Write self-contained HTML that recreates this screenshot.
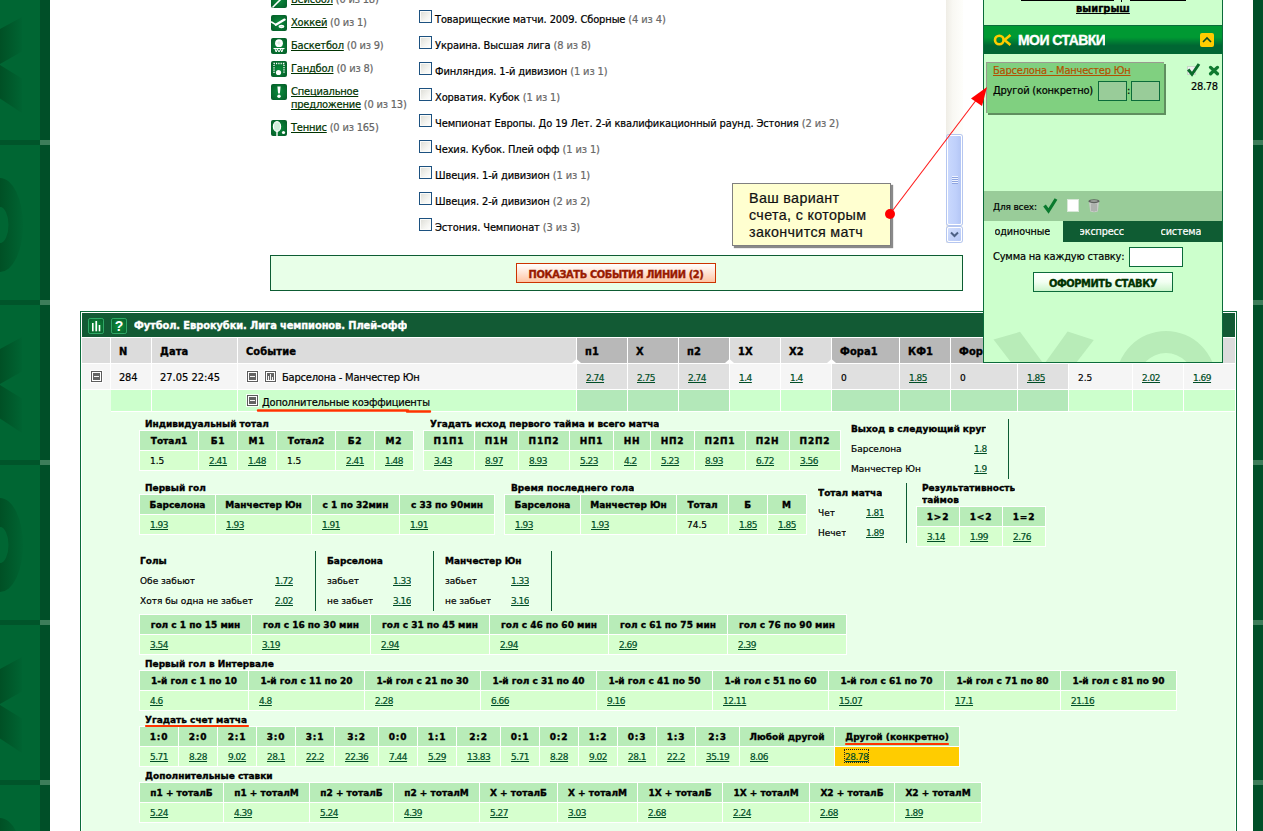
<!DOCTYPE html><html lang="ru"><head><meta charset="utf-8"><title>Линия</title><style>
html,body{margin:0;padding:0;}
body{width:1263px;height:831px;overflow:hidden;background:#fff;position:relative;font-family:"DejaVu Sans Condensed","Liberation Sans",sans-serif;font-size:11px;letter-spacing:-0.2px;color:#000;-webkit-text-stroke:0.2px;}
div,span,a{box-sizing:border-box;text-decoration-skip-ink:none;}
.ab{position:absolute;}
.c{position:absolute;white-space:nowrap;overflow:hidden;}
a.g{color:#005028;text-decoration:underline;}
.s10{font-family:"DejaVu Sans","Liberation Sans",sans-serif;font-size:9px;letter-spacing:0;}
.b{font-weight:bold;-webkit-text-stroke:0.35px;}
.od{color:#004d26;text-decoration:underline;letter-spacing:-0.5px;}
.hd{background:#b8ecb8;font-weight:bold;-webkit-text-stroke:0.35px;}
.dt{background:#d6ffce;}
.sp a{color:#003300;text-decoration:underline;}
.sp span{color:#666;}
.cb{position:absolute;width:13px;height:13px;border:1px solid #1c5180;background:linear-gradient(135deg,#dcdcd5 0%,#f4f4f0 60%,#fff 100%);box-shadow:inset 0 0 0 1px #fbfbf8;}
.li{position:absolute;left:435px;white-space:nowrap;line-height:13px;letter-spacing:-0.12px;}
.li span{color:#686868;}
.vl{position:absolute;width:1px;background:#0d5c33;}
.mi{position:absolute;width:11px;height:11px;border:1px solid #5c5c5c;background:#fff;box-shadow:0 0 0 1px rgba(255,255,255,.8);}
.mi i{position:absolute;left:1px;top:1px;width:7px;height:7px;background:#636363;}
.mi b{position:absolute;left:2px;top:4px;width:5px;height:1px;background:#f4f4f4;}
</style></head><body>
<div class="ab" style="left:0;top:0;width:40px;height:831px;background:#006633"></div>
<div class="ab" style="left:40px;top:0;width:10px;height:831px;background:#004f28"></div>
<div class="ab" style="left:1253px;top:0;width:10px;height:831px;background:#004f28"></div>
<svg class="ab" style="left:0;top:0" width="50" height="831" viewBox="0 0 50 831"><defs><linearGradient id="lg" x1="0" x2="1" y1="0" y2="0"><stop offset="0" stop-color="#005025"/><stop offset="0.55" stop-color="#005b2c"/><stop offset="1" stop-color="#006432"/></linearGradient></defs><polygon points="0,29 22,17 22,51.5 0,64" fill="url(#lg)"/><polygon points="0,65 22,78.5 22,113 0,98.5" fill="url(#lg)"/><path fill-rule="evenodd" fill="url(#lg)" d="M0,178 A23,47 0 0 1 0,272 Z M0,207 A8.5,18 0 0 1 0,243 Z"/><polygon points="0,349 22,337 22,371.5 0,384" fill="url(#lg)"/><polygon points="0,385 22,398.5 22,433 0,418.5" fill="url(#lg)"/><path fill-rule="evenodd" fill="url(#lg)" d="M0,498 A23,47 0 0 1 0,592 Z M0,527 A8.5,18 0 0 1 0,563 Z"/><polygon points="0,669 22,657 22,691.5 0,704" fill="url(#lg)"/><polygon points="0,705 22,718.5 22,753 0,738.5" fill="url(#lg)"/><path fill-rule="evenodd" fill="url(#lg)" d="M0,818 A23,47 0 0 1 0,912 Z M0,847 A8.5,18 0 0 1 0,883 Z"/><rect x="0" y="140" width="40" height="5" fill="#00552a"/><rect x="40" y="140" width="10" height="5" fill="#3d7d5a"/><rect x="0" y="300" width="40" height="5" fill="#00552a"/><rect x="40" y="300" width="10" height="5" fill="#3d7d5a"/><rect x="0" y="460" width="40" height="5" fill="#00552a"/><rect x="40" y="460" width="10" height="5" fill="#3d7d5a"/><rect x="0" y="620" width="40" height="5" fill="#00552a"/><rect x="40" y="620" width="10" height="5" fill="#3d7d5a"/><rect x="0" y="780" width="40" height="5" fill="#00552a"/><rect x="40" y="780" width="10" height="5" fill="#3d7d5a"/></svg>
<div class="ab" style="left:1253px;top:140px;width:10px;height:5px;background:#3d7d5a"></div>
<div class="ab" style="left:1253px;top:300px;width:10px;height:5px;background:#3d7d5a"></div>
<div class="ab" style="left:1253px;top:460px;width:10px;height:5px;background:#3d7d5a"></div>
<div class="ab" style="left:1253px;top:620px;width:10px;height:5px;background:#3d7d5a"></div>
<div class="ab" style="left:1253px;top:780px;width:10px;height:5px;background:#3d7d5a"></div>
<div class="ab" style="left:271px;top:-8px;width:16px;height:16px"><svg width="16" height="16" viewBox="0 0 16 16" style="display:block"><defs><radialGradient id="rgbase" cx="50%" cy="50%" r="70%"><stop offset="0" stop-color="#0a8c3c"/><stop offset="1" stop-color="#045a27"/></radialGradient></defs><rect x="0" y="0" width="16" height="16" rx="2" fill="url(#rgbase)"/><path d="M2,15 L12,5" stroke="#fff" stroke-width="1.6" stroke-linecap="round"/></svg></div>
<div class="ab sp" style="left:291px;top:-7px;line-height:13px;white-space:nowrap"><a>Бейсбол</a> <span>(0 из 18)</span></div>
<div class="ab" style="left:271px;top:15px;width:16px;height:16px"><svg width="16" height="16" viewBox="0 0 16 16" style="display:block"><defs><radialGradient id="rghock" cx="50%" cy="50%" r="70%"><stop offset="0" stop-color="#0a8c3c"/><stop offset="1" stop-color="#045a27"/></radialGradient></defs><rect x="0" y="0" width="16" height="16" rx="2" fill="url(#rghock)"/><path d="M0.5,7 L4.8,9.7" stroke="#fff" stroke-width="1.5" fill="none" stroke-linecap="round"/><path d="M4.8,9.7 L13.6,4.6" stroke="#fff" stroke-width="2.3" fill="none" stroke-linecap="round"/><ellipse cx="10.5" cy="11.5" rx="2.9" ry="1.7" fill="#fff"/><path d="M9.3,11.6 h2.4" stroke="#8fd0a5" stroke-width="0.6"/></svg></div>
<div class="ab sp" style="left:291px;top:16px;line-height:13px;white-space:nowrap"><a>Хоккей</a> <span>(0 из 1)</span></div>
<div class="ab" style="left:271px;top:38px;width:16px;height:16px"><svg width="16" height="16" viewBox="0 0 16 16" style="display:block"><defs><radialGradient id="rgbask" cx="50%" cy="50%" r="70%"><stop offset="0" stop-color="#0a8c3c"/><stop offset="1" stop-color="#045a27"/></radialGradient></defs><rect x="0" y="0" width="16" height="16" rx="2" fill="url(#rgbask)"/><circle cx="8" cy="5.2" r="3.9" fill="#fff"/><path d="M5.5,5 h4 M8,3 v4" stroke="#bfe6cc" stroke-width="0.7"/><path d="M2.5,10.5 h11 M4,11 l1.2,3 l1.2,-3 l1.6,3 l1.6,-3 l1.2,3 l1.2,-3" stroke="#fff" stroke-width="1" fill="none"/></svg></div>
<div class="ab sp" style="left:291px;top:39px;line-height:13px;white-space:nowrap"><a>Баскетбол</a> <span>(0 из 9)</span></div>
<div class="ab" style="left:271px;top:61px;width:16px;height:16px"><svg width="16" height="16" viewBox="0 0 16 16" style="display:block"><defs><radialGradient id="rghand" cx="50%" cy="50%" r="70%"><stop offset="0" stop-color="#0a8c3c"/><stop offset="1" stop-color="#045a27"/></radialGradient></defs><rect x="0" y="0" width="16" height="16" rx="2" fill="url(#rghand)"/><path d="M3,12 V2.5 H13 V12" stroke="#fff" stroke-width="1.3" fill="none" stroke-dasharray="1.2 1.1"/><circle cx="7.5" cy="11.5" r="2.6" fill="#fff"/></svg></div>
<div class="ab sp" style="left:291px;top:62px;line-height:13px;white-space:nowrap"><a>Гандбол</a> <span>(0 из 8)</span></div>
<div class="ab" style="left:271px;top:84px;width:16px;height:16px"><svg width="16" height="16" viewBox="0 0 16 16" style="display:block"><defs><radialGradient id="rgspec" cx="50%" cy="50%" r="70%"><stop offset="0" stop-color="#0a8c3c"/><stop offset="1" stop-color="#045a27"/></radialGradient></defs><rect x="0" y="0" width="16" height="16" rx="2" fill="url(#rgspec)"/><path d="M6.4,2.5 h3.2 l-0.7,7 h-1.8 z" fill="#fff"/><circle cx="8" cy="12.3" r="1.7" fill="#fff"/></svg></div>
<div class="ab sp" style="left:291px;top:85px;line-height:13px;white-space:nowrap"><a>Специальное</a><br><a>предложение</a> <span>(0 из 13)</span></div>
<div class="ab" style="left:271px;top:120px;width:16px;height:16px"><svg width="16" height="16" viewBox="0 0 16 16" style="display:block"><defs><radialGradient id="rgtenn" cx="50%" cy="50%" r="70%"><stop offset="0" stop-color="#0a8c3c"/><stop offset="1" stop-color="#045a27"/></radialGradient></defs><rect x="0" y="0" width="16" height="16" rx="2" fill="url(#rgtenn)"/><ellipse cx="6" cy="6.5" rx="3.6" ry="4.8" fill="#cfeeda" stroke="#fff" stroke-width="1.2"/><path d="M6,11 v5" stroke="#fff" stroke-width="1.4"/><circle cx="12.5" cy="12.5" r="1.6" fill="#fff"/></svg></div>
<div class="ab sp" style="left:291px;top:121px;line-height:13px;white-space:nowrap"><a>Теннис</a> <span>(0 из 165)</span></div>
<div class="cb" style="left:419px;top:10px"></div>
<div class="li" style="top:13px">Товарищеские матчи. 2009. Сборные <span>(4 из 4)</span></div>
<div class="cb" style="left:419px;top:36px"></div>
<div class="li" style="top:39px">Украина. Высшая лига <span>(8 из 8)</span></div>
<div class="cb" style="left:419px;top:62px"></div>
<div class="li" style="top:65px">Финляндия. 1-й дивизион <span>(1 из 1)</span></div>
<div class="cb" style="left:419px;top:88px"></div>
<div class="li" style="top:91px">Хорватия. Кубок <span>(1 из 1)</span></div>
<div class="cb" style="left:419px;top:114px"></div>
<div class="li" style="top:117px">Чемпионат Европы. До 19 Лет. 2-й квалификационный раунд. Эстония <span>(2 из 2)</span></div>
<div class="cb" style="left:419px;top:140px"></div>
<div class="li" style="top:143px">Чехия. Кубок. Плей офф <span>(1 из 1)</span></div>
<div class="cb" style="left:419px;top:166px"></div>
<div class="li" style="top:169px">Швеция. 1-й дивизион <span>(1 из 1)</span></div>
<div class="cb" style="left:419px;top:192px"></div>
<div class="li" style="top:195px">Швеция. 2-й дивизион <span>(2 из 2)</span></div>
<div class="cb" style="left:419px;top:218px"></div>
<div class="li" style="top:221px">Эстония. Чемпионат <span>(3 из 3)</span></div>
<div class="ab" style="left:946px;top:0;width:17px;height:243px;background:linear-gradient(90deg,#efede6 0%,#f9f8f3 40%,#fefefb 100%)"></div>
<div class="ab" style="left:947px;top:135px;width:15px;height:90px;background:linear-gradient(90deg,#c9d8fd 0%,#bfd0fb 60%,#b4c6f5 100%);border:1px solid #fff;border-radius:2px;box-shadow:0 0 0 1px #b5c6f0"></div>
<div class="ab" style="left:952px;top:176px;width:6px;height:1px;background:#eef3ff;box-shadow:0 1px 0 #8ea5e0"></div>
<div class="ab" style="left:952px;top:178px;width:6px;height:1px;background:#eef3ff;box-shadow:0 1px 0 #8ea5e0"></div>
<div class="ab" style="left:952px;top:180px;width:6px;height:1px;background:#eef3ff;box-shadow:0 1px 0 #8ea5e0"></div>
<div class="ab" style="left:952px;top:182px;width:6px;height:1px;background:#eef3ff;box-shadow:0 1px 0 #8ea5e0"></div>
<div class="ab" style="left:947px;top:227px;width:15px;height:15px;background:linear-gradient(135deg,#d2defd,#b6c8f6);border:1px solid #fff;border-radius:2px;box-shadow:0 0 0 1px #b5c6f0"></div>
<svg class="ab" style="left:947px;top:227px" width="15" height="15" viewBox="0 0 15 15"><path d="M4,5.5 L7.5,9 L11,5.5" stroke="#4d6185" stroke-width="2" fill="none"/></svg>
<div class="ab" style="left:270px;top:255px;width:693px;height:36px;border:1px solid #0d5c33;background:#e8ffe8"></div>
<div class="ab b" style="left:516px;top:263px;width:200px;height:20px;border:1px solid #cc3300;background:linear-gradient(180deg,#fff 0%,#ffe3d3 50%,#ffc4a3 100%);color:#991a00;text-align:center;line-height:22px;letter-spacing:-0.4px;overflow:hidden">ПОКАЗАТЬ СОБЫТИЯ ЛИНИИ (2)</div>
<div class="ab" style="left:80px;top:311px;width:1157px;height:540px;border:1px solid #0b6b3a;background:#fff"></div>
<div class="ab" style="left:82px;top:313px;width:1153px;height:540px;background:#e9ffe9"></div>
<div class="ab" style="left:82px;top:313px;width:1153px;height:24px;background:#125a34"></div>
<div class="ab" style="left:82px;top:337px;width:1153px;height:53px;background:#fff"></div>
<div class="ab" style="left:111px;top:390px;width:1124px;height:22px;background:#fff"></div>
<svg class="ab" style="left:88px;top:318px" width="16" height="16" viewBox="0 0 16 16"><defs><radialGradient id="tg88" cx="50%" cy="50%" r="65%"><stop offset="0" stop-color="#0a9238"/><stop offset="1" stop-color="#0a5c2e"/></radialGradient></defs><rect x="0.5" y="0.5" width="15" height="15" rx="1.6" fill="url(#tg88)" stroke="#2fa866"/><rect x="4" y="5" width="1.6" height="8.3" fill="#fff"/><rect x="7.4" y="3" width="1.7" height="10.3" fill="#fff"/><rect x="10.7" y="7" width="1.6" height="6.3" fill="#fff"/></svg>
<svg class="ab" style="left:111px;top:318px" width="16" height="16" viewBox="0 0 16 16"><defs><radialGradient id="tg111" cx="50%" cy="50%" r="65%"><stop offset="0" stop-color="#0a9238"/><stop offset="1" stop-color="#0a5c2e"/></radialGradient></defs><rect x="0.5" y="0.5" width="15" height="15" rx="1.6" fill="url(#tg111)" stroke="#2fa866"/><text x="8" y="13" text-anchor="middle" font-family="Liberation Sans,sans-serif" font-weight="bold" font-size="14" fill="#fff">?</text></svg>
<div class="c b" style="left:134px;top:313px;height:24px;line-height:26px;color:#fff;letter-spacing:-0.1px">Футбол. Еврокубки. Лига чемпионов. Плей-офф</div>
<div class="c b" style="left:82px;top:338px;width:28px;height:25px;line-height:27px;padding-left:8px;background:#dcdcdc;font-size:11px;letter-spacing:0.1px"></div>
<div class="c" style="left:82px;top:364px;width:28px;height:25px;line-height:27px;padding-left:8px;background:#f5f5f5;"></div>
<div class="c b" style="left:111px;top:338px;width:40px;height:25px;line-height:27px;padding-left:8px;background:#dcdcdc;font-size:11px;letter-spacing:0.1px">N</div>
<div class="c" style="left:111px;top:364px;width:40px;height:25px;line-height:27px;padding-left:8px;background:#f5f5f5;">284</div>
<div class="ab" style="left:111px;top:390px;width:40px;height:21px;background:#ccffcc"></div>
<div class="c b" style="left:152px;top:338px;width:85px;height:25px;line-height:27px;padding-left:8px;background:#dcdcdc;font-size:11px;letter-spacing:0.1px">Дата</div>
<div class="c" style="left:152px;top:364px;width:85px;height:25px;line-height:27px;padding-left:8px;background:#f5f5f5;letter-spacing:0;">27.05 22:45</div>
<div class="ab" style="left:152px;top:390px;width:85px;height:21px;background:#ccffcc"></div>
<div class="c b" style="left:238px;top:338px;width:338px;height:25px;line-height:27px;padding-left:8px;background:#dcdcdc;font-size:11px;letter-spacing:0.1px">Событие</div>
<div class="c" style="left:238px;top:364px;width:338px;height:25px;line-height:27px;padding-left:8px;background:#f5f5f5;"></div>
<div class="ab" style="left:238px;top:390px;width:338px;height:21px;background:#ccffcc"></div>
<div class="c b" style="left:577px;top:338px;width:50px;height:25px;line-height:27px;padding-left:8px;background:#b8b8b8;font-size:11px;letter-spacing:0.1px">п1</div>
<div class="c s10" style="left:577px;top:364px;width:50px;height:25px;line-height:28px;padding-left:9px;background:#e0e0e0;"><span class="od">2.74</span></div>
<div class="ab" style="left:577px;top:390px;width:50px;height:21px;background:#b3e8b9"></div>
<div class="c b" style="left:628px;top:338px;width:50px;height:25px;line-height:27px;padding-left:8px;background:#b8b8b8;font-size:11px;letter-spacing:0.1px">X</div>
<div class="c s10" style="left:628px;top:364px;width:50px;height:25px;line-height:28px;padding-left:9px;background:#e0e0e0;"><span class="od">2.75</span></div>
<div class="ab" style="left:628px;top:390px;width:50px;height:21px;background:#b3e8b9"></div>
<div class="c b" style="left:679px;top:338px;width:50px;height:25px;line-height:27px;padding-left:8px;background:#b8b8b8;font-size:11px;letter-spacing:0.1px">п2</div>
<div class="c s10" style="left:679px;top:364px;width:50px;height:25px;line-height:28px;padding-left:9px;background:#e0e0e0;"><span class="od">2.74</span></div>
<div class="ab" style="left:679px;top:390px;width:50px;height:21px;background:#b3e8b9"></div>
<div class="c b" style="left:730px;top:338px;width:50px;height:25px;line-height:27px;padding-left:8px;background:#dcdcdc;font-size:11px;letter-spacing:0.1px">1X</div>
<div class="c s10" style="left:730px;top:364px;width:50px;height:25px;line-height:28px;padding-left:9px;background:#f5f5f5;"><span class="od">1.4</span></div>
<div class="ab" style="left:730px;top:390px;width:50px;height:21px;background:#ccffcc"></div>
<div class="c b" style="left:781px;top:338px;width:50px;height:25px;line-height:27px;padding-left:8px;background:#dcdcdc;font-size:11px;letter-spacing:0.1px">X2</div>
<div class="c s10" style="left:781px;top:364px;width:50px;height:25px;line-height:28px;padding-left:9px;background:#f5f5f5;"><span class="od">1.4</span></div>
<div class="ab" style="left:781px;top:390px;width:50px;height:21px;background:#ccffcc"></div>
<div class="c b" style="left:832px;top:338px;width:67px;height:25px;line-height:27px;padding-left:8px;background:#b8b8b8;font-size:11px;letter-spacing:0.1px">Фора1</div>
<div class="c s10" style="left:832px;top:364px;width:67px;height:25px;line-height:28px;padding-left:9px;background:#e0e0e0;">0</div>
<div class="ab" style="left:832px;top:390px;width:67px;height:21px;background:#b3e8b9"></div>
<div class="c b" style="left:900px;top:338px;width:50px;height:25px;line-height:27px;padding-left:8px;background:#b8b8b8;font-size:11px;letter-spacing:0.1px">КФ1</div>
<div class="c s10" style="left:900px;top:364px;width:50px;height:25px;line-height:28px;padding-left:9px;background:#e0e0e0;"><span class="od">1.85</span></div>
<div class="ab" style="left:900px;top:390px;width:50px;height:21px;background:#b3e8b9"></div>
<div class="c b" style="left:951px;top:338px;width:66px;height:25px;line-height:27px;padding-left:8px;background:#b8b8b8;font-size:11px;letter-spacing:0.1px">Фора2</div>
<div class="c s10" style="left:951px;top:364px;width:66px;height:25px;line-height:28px;padding-left:9px;background:#e0e0e0;">0</div>
<div class="ab" style="left:951px;top:390px;width:66px;height:21px;background:#b3e8b9"></div>
<div class="c b" style="left:1018px;top:338px;width:50px;height:25px;line-height:27px;padding-left:8px;background:#b8b8b8;font-size:11px;letter-spacing:0.1px">КФ2</div>
<div class="c s10" style="left:1018px;top:364px;width:50px;height:25px;line-height:28px;padding-left:9px;background:#e0e0e0;"><span class="od">1.85</span></div>
<div class="ab" style="left:1018px;top:390px;width:50px;height:21px;background:#b3e8b9"></div>
<div class="c b" style="left:1069px;top:338px;width:63px;height:25px;line-height:27px;padding-left:8px;background:#dcdcdc;font-size:11px;letter-spacing:0.1px">Тотал</div>
<div class="c s10" style="left:1069px;top:364px;width:63px;height:25px;line-height:28px;padding-left:9px;background:#f5f5f5;">2.5</div>
<div class="ab" style="left:1069px;top:390px;width:63px;height:21px;background:#ccffcc"></div>
<div class="c b" style="left:1133px;top:338px;width:50px;height:25px;line-height:27px;padding-left:8px;background:#dcdcdc;font-size:11px;letter-spacing:0.1px">Б</div>
<div class="c s10" style="left:1133px;top:364px;width:50px;height:25px;line-height:28px;padding-left:9px;background:#f5f5f5;"><span class="od">2.02</span></div>
<div class="ab" style="left:1133px;top:390px;width:50px;height:21px;background:#ccffcc"></div>
<div class="c b" style="left:1184px;top:338px;width:51px;height:25px;line-height:27px;padding-left:8px;background:#dcdcdc;font-size:11px;letter-spacing:0.1px">М</div>
<div class="c s10" style="left:1184px;top:364px;width:51px;height:25px;line-height:28px;padding-left:9px;background:#f5f5f5;"><span class="od">1.69</span></div>
<div class="ab" style="left:1184px;top:390px;width:51px;height:21px;background:#ccffcc"></div>
<svg class="ab" style="left:572.0px;top:359px" width="9" height="4" viewBox="0 0 9 4"><polygon points="0,4 4.5,0 9,4" fill="#fff"/></svg>
<svg class="ab" style="left:725.0px;top:359px" width="9" height="4" viewBox="0 0 9 4"><polygon points="0,4 4.5,0 9,4" fill="#fff"/></svg>
<svg class="ab" style="left:827.0px;top:359px" width="9" height="4" viewBox="0 0 9 4"><polygon points="0,4 4.5,0 9,4" fill="#fff"/></svg>
<div class="mi" style="left:91px;top:371px"><i></i><b></b></div>
<div class="mi" style="left:247px;top:371px"><i></i><b></b></div>
<div class="mi" style="left:247px;top:395px"><i></i><b></b></div>
<div class="mi" style="left:265px;top:371px"><i></i><u style="position:absolute;left:2px;top:4px;width:1px;height:4px;background:#f4f4f4"></u><u style="position:absolute;left:4px;top:2px;width:1px;height:6px;background:#f4f4f4"></u><u style="position:absolute;left:6px;top:5px;width:1px;height:3px;background:#f4f4f4"></u></div>
<div class="c" style="left:282px;top:364px;height:25px;line-height:27px">Барселона - Манчестер Юн</div>
<div class="c" style="left:262px;top:390px;height:21px;line-height:25px">Дополнительные коэффициенты</div>
<div class="c s10 b" style="left:145px;top:418px;height:13px;line-height:13px">Индивидуальный тотал</div>
<div class="ab" style="left:139px;top:430px;width:275px;height:41px;background:#fff"></div>
<div class="c s10 hd" style="left:140px;top:431px;width:58px;height:19px;line-height:21px;text-align:center;">Тотал1</div>
<div class="c s10 dt" style="left:140px;top:451px;width:58px;height:19px;line-height:21px;padding-left:10px;">1.5</div>
<div class="c s10 hd" style="left:199px;top:431px;width:38px;height:19px;line-height:21px;text-align:center;letter-spacing:0.8px;">Б1</div>
<div class="c s10 dt" style="left:199px;top:451px;width:38px;height:19px;line-height:21px;padding-left:10px;"><span class="od">2.41</span></div>
<div class="c s10 hd" style="left:238px;top:431px;width:38px;height:19px;line-height:21px;text-align:center;letter-spacing:0.8px;">М1</div>
<div class="c s10 dt" style="left:238px;top:451px;width:38px;height:19px;line-height:21px;padding-left:10px;"><span class="od">1.48</span></div>
<div class="c s10 hd" style="left:277px;top:431px;width:58px;height:19px;line-height:21px;text-align:center;">Тотал2</div>
<div class="c s10 dt" style="left:277px;top:451px;width:58px;height:19px;line-height:21px;padding-left:10px;">1.5</div>
<div class="c s10 hd" style="left:336px;top:431px;width:38px;height:19px;line-height:21px;text-align:center;letter-spacing:0.8px;">Б2</div>
<div class="c s10 dt" style="left:336px;top:451px;width:38px;height:19px;line-height:21px;padding-left:10px;"><span class="od">2.41</span></div>
<div class="c s10 hd" style="left:375px;top:431px;width:38px;height:19px;line-height:21px;text-align:center;letter-spacing:0.8px;">М2</div>
<div class="c s10 dt" style="left:375px;top:451px;width:38px;height:19px;line-height:21px;padding-left:10px;"><span class="od">1.48</span></div>
<div class="c s10 b" style="left:430px;top:418px;height:13px;line-height:13px">Угадать исход первого тайма и всего матча</div>
<div class="ab" style="left:423px;top:430px;width:418px;height:41px;background:#fff"></div>
<div class="c s10 hd" style="left:424px;top:431px;width:50px;height:19px;line-height:21px;text-align:center;letter-spacing:0.8px;">П1П1</div>
<div class="c s10 dt" style="left:424px;top:451px;width:50px;height:19px;line-height:21px;padding-left:10px;"><span class="od">3.43</span></div>
<div class="c s10 hd" style="left:475px;top:431px;width:43px;height:19px;line-height:21px;text-align:center;letter-spacing:0.8px;">П1Н</div>
<div class="c s10 dt" style="left:475px;top:451px;width:43px;height:19px;line-height:21px;padding-left:10px;"><span class="od">8.97</span></div>
<div class="c s10 hd" style="left:519px;top:431px;width:50px;height:19px;line-height:21px;text-align:center;letter-spacing:0.8px;">П1П2</div>
<div class="c s10 dt" style="left:519px;top:451px;width:50px;height:19px;line-height:21px;padding-left:10px;"><span class="od">8.93</span></div>
<div class="c s10 hd" style="left:570px;top:431px;width:43px;height:19px;line-height:21px;text-align:center;letter-spacing:0.8px;">НП1</div>
<div class="c s10 dt" style="left:570px;top:451px;width:43px;height:19px;line-height:21px;padding-left:10px;"><span class="od">5.23</span></div>
<div class="c s10 hd" style="left:614px;top:431px;width:36px;height:19px;line-height:21px;text-align:center;letter-spacing:0.8px;">НН</div>
<div class="c s10 dt" style="left:614px;top:451px;width:36px;height:19px;line-height:21px;padding-left:10px;"><span class="od">4.2</span></div>
<div class="c s10 hd" style="left:651px;top:431px;width:43px;height:19px;line-height:21px;text-align:center;letter-spacing:0.8px;">НП2</div>
<div class="c s10 dt" style="left:651px;top:451px;width:43px;height:19px;line-height:21px;padding-left:10px;"><span class="od">5.23</span></div>
<div class="c s10 hd" style="left:695px;top:431px;width:50px;height:19px;line-height:21px;text-align:center;letter-spacing:0.8px;">П2П1</div>
<div class="c s10 dt" style="left:695px;top:451px;width:50px;height:19px;line-height:21px;padding-left:10px;"><span class="od">8.93</span></div>
<div class="c s10 hd" style="left:746px;top:431px;width:43px;height:19px;line-height:21px;text-align:center;letter-spacing:0.8px;">П2Н</div>
<div class="c s10 dt" style="left:746px;top:451px;width:43px;height:19px;line-height:21px;padding-left:10px;"><span class="od">6.72</span></div>
<div class="c s10 hd" style="left:790px;top:431px;width:50px;height:19px;line-height:21px;text-align:center;letter-spacing:0.8px;">П2П2</div>
<div class="c s10 dt" style="left:790px;top:451px;width:50px;height:19px;line-height:21px;padding-left:10px;"><span class="od">3.56</span></div>
<div class="c s10 b" style="left:851px;top:423px;height:13px;line-height:13px">Выход в следующий круг</div>
<div class="c s10" style="left:851px;top:443px;height:13px;line-height:13px">Барселона</div>
<div class="c s10" style="left:974px;top:443px;height:13px;line-height:13px"><span class="od">1.8</span></div>
<div class="c s10" style="left:851px;top:463px;height:13px;line-height:13px">Манчестер Юн</div>
<div class="c s10" style="left:974px;top:463px;height:13px;line-height:13px"><span class="od">1.9</span></div>
<div class="vl" style="left:1008px;top:419px;height:60px"></div>
<div class="c s10 b" style="left:145px;top:482px;height:13px;line-height:13px">Первый гол</div>
<div class="ab" style="left:139px;top:494px;width:356px;height:41px;background:#fff"></div>
<div class="c s10 hd" style="left:140px;top:495px;width:75px;height:19px;line-height:21px;text-align:center;">Барселона</div>
<div class="c s10 dt" style="left:140px;top:515px;width:75px;height:19px;line-height:21px;padding-left:10px;"><span class="od">1.93</span></div>
<div class="c s10 hd" style="left:216px;top:495px;width:95px;height:19px;line-height:21px;text-align:center;">Манчестер Юн</div>
<div class="c s10 dt" style="left:216px;top:515px;width:95px;height:19px;line-height:21px;padding-left:10px;"><span class="od">1.93</span></div>
<div class="c s10 hd" style="left:312px;top:495px;width:87px;height:19px;line-height:21px;text-align:center;">с 1 по 32мин</div>
<div class="c s10 dt" style="left:312px;top:515px;width:87px;height:19px;line-height:21px;padding-left:10px;"><span class="od">1.91</span></div>
<div class="c s10 hd" style="left:400px;top:495px;width:94px;height:19px;line-height:21px;text-align:center;">с 33 по 90мин</div>
<div class="c s10 dt" style="left:400px;top:515px;width:94px;height:19px;line-height:21px;padding-left:10px;"><span class="od">1.91</span></div>
<div class="c s10 b" style="left:511px;top:482px;height:13px;line-height:13px">Время последнего гола</div>
<div class="ab" style="left:504px;top:494px;width:303px;height:41px;background:#fff"></div>
<div class="c s10 hd" style="left:505px;top:495px;width:75px;height:19px;line-height:21px;text-align:center;">Барселона</div>
<div class="c s10 dt" style="left:505px;top:515px;width:75px;height:19px;line-height:21px;padding-left:10px;"><span class="od">1.93</span></div>
<div class="c s10 hd" style="left:581px;top:495px;width:95px;height:19px;line-height:21px;text-align:center;">Манчестер Юн</div>
<div class="c s10 dt" style="left:581px;top:515px;width:95px;height:19px;line-height:21px;padding-left:10px;"><span class="od">1.93</span></div>
<div class="c s10 hd" style="left:677px;top:495px;width:51px;height:19px;line-height:21px;text-align:center;">Тотал</div>
<div class="c s10 dt" style="left:677px;top:515px;width:51px;height:19px;line-height:21px;padding-left:10px;">74.5</div>
<div class="c s10 hd" style="left:729px;top:495px;width:38px;height:19px;line-height:21px;text-align:center;letter-spacing:0.8px;">Б</div>
<div class="c s10 dt" style="left:729px;top:515px;width:38px;height:19px;line-height:21px;padding-left:10px;"><span class="od">1.85</span></div>
<div class="c s10 hd" style="left:768px;top:495px;width:38px;height:19px;line-height:21px;text-align:center;letter-spacing:0.8px;">М</div>
<div class="c s10 dt" style="left:768px;top:515px;width:38px;height:19px;line-height:21px;padding-left:10px;"><span class="od">1.85</span></div>
<div class="c s10 b" style="left:818px;top:487px;height:13px;line-height:13px">Тотал матча</div>
<div class="c s10" style="left:818px;top:507px;height:13px;line-height:13px">Чет</div>
<div class="c s10" style="left:866px;top:507px;height:13px;line-height:13px"><span class="od">1.81</span></div>
<div class="c s10" style="left:818px;top:527px;height:13px;line-height:13px">Нечет</div>
<div class="c s10" style="left:866px;top:527px;height:13px;line-height:13px"><span class="od">1.89</span></div>
<div class="vl" style="left:906px;top:483px;height:60px"></div>
<div class="c s10 b" style="left:922px;top:482px;height:13px;line-height:13px">Результативность</div>
<div class="c s10 b" style="left:922px;top:494px;height:13px;line-height:13px">таймов</div>
<div class="ab" style="left:916px;top:506px;width:130px;height:41px;background:#fff"></div>
<div class="c s10 hd" style="left:917px;top:507px;width:42px;height:19px;line-height:21px;text-align:center;letter-spacing:0.8px;">1&gt;2</div>
<div class="c s10 dt" style="left:917px;top:527px;width:42px;height:19px;line-height:21px;padding-left:10px;"><span class="od">3.14</span></div>
<div class="c s10 hd" style="left:960px;top:507px;width:42px;height:19px;line-height:21px;text-align:center;letter-spacing:0.8px;">1&lt;2</div>
<div class="c s10 dt" style="left:960px;top:527px;width:42px;height:19px;line-height:21px;padding-left:10px;"><span class="od">1.99</span></div>
<div class="c s10 hd" style="left:1003px;top:507px;width:42px;height:19px;line-height:21px;text-align:center;letter-spacing:0.8px;">1=2</div>
<div class="c s10 dt" style="left:1003px;top:527px;width:42px;height:19px;line-height:21px;padding-left:10px;"><span class="od">2.76</span></div>
<div class="c s10 b" style="left:140px;top:555px;height:13px;line-height:13px">Голы</div>
<div class="c s10" style="left:140px;top:575px;height:13px;line-height:13px">Обе забьют</div>
<div class="c s10" style="left:275px;top:575px;height:13px;line-height:13px"><span class="od">1.72</span></div>
<div class="c s10" style="left:140px;top:595px;height:13px;line-height:13px">Хотя бы одна не забьет</div>
<div class="c s10" style="left:275px;top:595px;height:13px;line-height:13px"><span class="od">2.02</span></div>
<div class="vl" style="left:315px;top:551px;height:60px"></div>
<div class="c s10 b" style="left:327px;top:555px;height:13px;line-height:13px">Барселона</div>
<div class="c s10" style="left:327px;top:575px;height:13px;line-height:13px">забьет</div>
<div class="c s10" style="left:393px;top:575px;height:13px;line-height:13px"><span class="od">1.33</span></div>
<div class="c s10" style="left:327px;top:595px;height:13px;line-height:13px">не забьет</div>
<div class="c s10" style="left:393px;top:595px;height:13px;line-height:13px"><span class="od">3.16</span></div>
<div class="vl" style="left:433px;top:551px;height:60px"></div>
<div class="c s10 b" style="left:445px;top:555px;height:13px;line-height:13px">Манчестер Юн</div>
<div class="c s10" style="left:445px;top:575px;height:13px;line-height:13px">забьет</div>
<div class="c s10" style="left:511px;top:575px;height:13px;line-height:13px"><span class="od">1.33</span></div>
<div class="c s10" style="left:445px;top:595px;height:13px;line-height:13px">не забьет</div>
<div class="c s10" style="left:511px;top:595px;height:13px;line-height:13px"><span class="od">3.16</span></div>
<div class="vl" style="left:551px;top:551px;height:60px"></div>
<div class="ab" style="left:139px;top:614px;width:708px;height:41px;background:#fff"></div>
<div class="c s10 hd" style="left:140px;top:615px;width:111px;height:19px;line-height:21px;text-align:center;">гол с 1 по 15 мин</div>
<div class="c s10 dt" style="left:140px;top:635px;width:111px;height:19px;line-height:21px;padding-left:10px;"><span class="od">3.54</span></div>
<div class="c s10 hd" style="left:252px;top:615px;width:118px;height:19px;line-height:21px;text-align:center;">гол с 16 по 30 мин</div>
<div class="c s10 dt" style="left:252px;top:635px;width:118px;height:19px;line-height:21px;padding-left:10px;"><span class="od">3.19</span></div>
<div class="c s10 hd" style="left:371px;top:615px;width:118px;height:19px;line-height:21px;text-align:center;">гол с 31 по 45 мин</div>
<div class="c s10 dt" style="left:371px;top:635px;width:118px;height:19px;line-height:21px;padding-left:10px;"><span class="od">2.94</span></div>
<div class="c s10 hd" style="left:490px;top:615px;width:118px;height:19px;line-height:21px;text-align:center;">гол с 46 по 60 мин</div>
<div class="c s10 dt" style="left:490px;top:635px;width:118px;height:19px;line-height:21px;padding-left:10px;"><span class="od">2.94</span></div>
<div class="c s10 hd" style="left:609px;top:615px;width:118px;height:19px;line-height:21px;text-align:center;">гол с 61 по 75 мин</div>
<div class="c s10 dt" style="left:609px;top:635px;width:118px;height:19px;line-height:21px;padding-left:10px;"><span class="od">2.69</span></div>
<div class="c s10 hd" style="left:728px;top:615px;width:118px;height:19px;line-height:21px;text-align:center;">гол с 76 по 90 мин</div>
<div class="c s10 dt" style="left:728px;top:635px;width:118px;height:19px;line-height:21px;padding-left:10px;"><span class="od">2.39</span></div>
<div class="c s10 b" style="left:145px;top:658px;height:13px;line-height:13px">Первый гол в Интервале</div>
<div class="ab" style="left:139px;top:670px;width:1038px;height:41px;background:#fff"></div>
<div class="c s10 hd" style="left:140px;top:671px;width:108px;height:19px;line-height:21px;text-align:center;">1-й гол с 1 по 10</div>
<div class="c s10 dt" style="left:140px;top:691px;width:108px;height:19px;line-height:21px;padding-left:10px;"><span class="od">4.6</span></div>
<div class="c s10 hd" style="left:249px;top:671px;width:115px;height:19px;line-height:21px;text-align:center;">1-й гол с 11 по 20</div>
<div class="c s10 dt" style="left:249px;top:691px;width:115px;height:19px;line-height:21px;padding-left:10px;"><span class="od">4.8</span></div>
<div class="c s10 hd" style="left:365px;top:671px;width:115px;height:19px;line-height:21px;text-align:center;">1-й гол с 21 по 30</div>
<div class="c s10 dt" style="left:365px;top:691px;width:115px;height:19px;line-height:21px;padding-left:10px;"><span class="od">2.28</span></div>
<div class="c s10 hd" style="left:481px;top:671px;width:115px;height:19px;line-height:21px;text-align:center;">1-й гол с 31 по 40</div>
<div class="c s10 dt" style="left:481px;top:691px;width:115px;height:19px;line-height:21px;padding-left:10px;"><span class="od">6.66</span></div>
<div class="c s10 hd" style="left:597px;top:671px;width:115px;height:19px;line-height:21px;text-align:center;">1-й гол с 41 по 50</div>
<div class="c s10 dt" style="left:597px;top:691px;width:115px;height:19px;line-height:21px;padding-left:10px;"><span class="od">9.16</span></div>
<div class="c s10 hd" style="left:713px;top:671px;width:115px;height:19px;line-height:21px;text-align:center;">1-й гол с 51 по 60</div>
<div class="c s10 dt" style="left:713px;top:691px;width:115px;height:19px;line-height:21px;padding-left:10px;"><span class="od">12.11</span></div>
<div class="c s10 hd" style="left:829px;top:671px;width:115px;height:19px;line-height:21px;text-align:center;">1-й гол с 61 по 70</div>
<div class="c s10 dt" style="left:829px;top:691px;width:115px;height:19px;line-height:21px;padding-left:10px;"><span class="od">15.07</span></div>
<div class="c s10 hd" style="left:945px;top:671px;width:115px;height:19px;line-height:21px;text-align:center;">1-й гол с 71 по 80</div>
<div class="c s10 dt" style="left:945px;top:691px;width:115px;height:19px;line-height:21px;padding-left:10px;"><span class="od">17.1</span></div>
<div class="c s10 hd" style="left:1061px;top:671px;width:115px;height:19px;line-height:21px;text-align:center;">1-й гол с 81 по 90</div>
<div class="c s10 dt" style="left:1061px;top:691px;width:115px;height:19px;line-height:21px;padding-left:10px;"><span class="od">21.16</span></div>
<div class="c s10 b" style="left:145px;top:714px;height:13px;line-height:13px">Угадать счет матча</div>
<div class="ab" style="left:139px;top:726px;width:821px;height:41px;background:#fff"></div>
<div class="c s10 hd" style="left:140px;top:727px;width:38px;height:19px;line-height:21px;text-align:center;letter-spacing:0.8px;">1:0</div>
<div class="c s10 dt" style="left:140px;top:747px;width:38px;height:19px;line-height:21px;padding-left:10px;"><span class="od">5.71</span></div>
<div class="c s10 hd" style="left:179px;top:727px;width:38px;height:19px;line-height:21px;text-align:center;letter-spacing:0.8px;">2:0</div>
<div class="c s10 dt" style="left:179px;top:747px;width:38px;height:19px;line-height:21px;padding-left:10px;"><span class="od">8.28</span></div>
<div class="c s10 hd" style="left:218px;top:727px;width:38px;height:19px;line-height:21px;text-align:center;letter-spacing:0.8px;">2:1</div>
<div class="c s10 dt" style="left:218px;top:747px;width:38px;height:19px;line-height:21px;padding-left:10px;"><span class="od">9.02</span></div>
<div class="c s10 hd" style="left:257px;top:727px;width:38px;height:19px;line-height:21px;text-align:center;letter-spacing:0.8px;">3:0</div>
<div class="c s10 dt" style="left:257px;top:747px;width:38px;height:19px;line-height:21px;padding-left:10px;"><span class="od">28.1</span></div>
<div class="c s10 hd" style="left:296px;top:727px;width:38px;height:19px;line-height:21px;text-align:center;letter-spacing:0.8px;">3:1</div>
<div class="c s10 dt" style="left:296px;top:747px;width:38px;height:19px;line-height:21px;padding-left:10px;"><span class="od">22.2</span></div>
<div class="c s10 hd" style="left:335px;top:727px;width:43px;height:19px;line-height:21px;text-align:center;letter-spacing:0.8px;">3:2</div>
<div class="c s10 dt" style="left:335px;top:747px;width:43px;height:19px;line-height:21px;padding-left:10px;"><span class="od">22.36</span></div>
<div class="c s10 hd" style="left:379px;top:727px;width:38px;height:19px;line-height:21px;text-align:center;letter-spacing:0.8px;">0:0</div>
<div class="c s10 dt" style="left:379px;top:747px;width:38px;height:19px;line-height:21px;padding-left:10px;"><span class="od">7.44</span></div>
<div class="c s10 hd" style="left:418px;top:727px;width:38px;height:19px;line-height:21px;text-align:center;letter-spacing:0.8px;">1:1</div>
<div class="c s10 dt" style="left:418px;top:747px;width:38px;height:19px;line-height:21px;padding-left:10px;"><span class="od">5.29</span></div>
<div class="c s10 hd" style="left:457px;top:727px;width:43px;height:19px;line-height:21px;text-align:center;letter-spacing:0.8px;">2:2</div>
<div class="c s10 dt" style="left:457px;top:747px;width:43px;height:19px;line-height:21px;padding-left:10px;"><span class="od">13.83</span></div>
<div class="c s10 hd" style="left:501px;top:727px;width:38px;height:19px;line-height:21px;text-align:center;letter-spacing:0.8px;">0:1</div>
<div class="c s10 dt" style="left:501px;top:747px;width:38px;height:19px;line-height:21px;padding-left:10px;"><span class="od">5.71</span></div>
<div class="c s10 hd" style="left:540px;top:727px;width:38px;height:19px;line-height:21px;text-align:center;letter-spacing:0.8px;">0:2</div>
<div class="c s10 dt" style="left:540px;top:747px;width:38px;height:19px;line-height:21px;padding-left:10px;"><span class="od">8.28</span></div>
<div class="c s10 hd" style="left:579px;top:727px;width:38px;height:19px;line-height:21px;text-align:center;letter-spacing:0.8px;">1:2</div>
<div class="c s10 dt" style="left:579px;top:747px;width:38px;height:19px;line-height:21px;padding-left:10px;"><span class="od">9.02</span></div>
<div class="c s10 hd" style="left:618px;top:727px;width:38px;height:19px;line-height:21px;text-align:center;letter-spacing:0.8px;">0:3</div>
<div class="c s10 dt" style="left:618px;top:747px;width:38px;height:19px;line-height:21px;padding-left:10px;"><span class="od">28.1</span></div>
<div class="c s10 hd" style="left:657px;top:727px;width:38px;height:19px;line-height:21px;text-align:center;letter-spacing:0.8px;">1:3</div>
<div class="c s10 dt" style="left:657px;top:747px;width:38px;height:19px;line-height:21px;padding-left:10px;"><span class="od">22.2</span></div>
<div class="c s10 hd" style="left:696px;top:727px;width:43px;height:19px;line-height:21px;text-align:center;letter-spacing:0.8px;">2:3</div>
<div class="c s10 dt" style="left:696px;top:747px;width:43px;height:19px;line-height:21px;padding-left:10px;"><span class="od">35.19</span></div>
<div class="c s10 hd" style="left:740px;top:727px;width:94px;height:19px;line-height:21px;text-align:center;">Любой другой</div>
<div class="c s10 dt" style="left:740px;top:747px;width:94px;height:19px;line-height:21px;padding-left:10px;"><span class="od">8.06</span></div>
<div class="c s10 hd" style="left:835px;top:727px;width:124px;height:19px;line-height:21px;text-align:center;">Другой (конкретно)</div>
<div class="c s10 dt" style="left:835px;top:747px;width:124px;height:19px;line-height:21px;padding-left:10px; background:#ffcc00;"><span class="od">28.78</span></div>
<div class="c s10 b" style="left:145px;top:770px;height:13px;line-height:13px">Дополнительные ставки</div>
<div class="ab" style="left:139px;top:782px;width:843px;height:41px;background:#fff"></div>
<div class="c s10 hd" style="left:140px;top:783px;width:83px;height:19px;line-height:21px;text-align:center;">п1 + тоталБ</div>
<div class="c s10 dt" style="left:140px;top:803px;width:83px;height:19px;line-height:21px;padding-left:10px;"><span class="od">5.24</span></div>
<div class="c s10 hd" style="left:224px;top:783px;width:85px;height:19px;line-height:21px;text-align:center;">п1 + тоталМ</div>
<div class="c s10 dt" style="left:224px;top:803px;width:85px;height:19px;line-height:21px;padding-left:10px;"><span class="od">4.39</span></div>
<div class="c s10 hd" style="left:310px;top:783px;width:83px;height:19px;line-height:21px;text-align:center;">п2 + тоталБ</div>
<div class="c s10 dt" style="left:310px;top:803px;width:83px;height:19px;line-height:21px;padding-left:10px;"><span class="od">5.24</span></div>
<div class="c s10 hd" style="left:394px;top:783px;width:85px;height:19px;line-height:21px;text-align:center;">п2 + тоталМ</div>
<div class="c s10 dt" style="left:394px;top:803px;width:85px;height:19px;line-height:21px;padding-left:10px;"><span class="od">4.39</span></div>
<div class="c s10 hd" style="left:480px;top:783px;width:77px;height:19px;line-height:21px;text-align:center;">X + тоталБ</div>
<div class="c s10 dt" style="left:480px;top:803px;width:77px;height:19px;line-height:21px;padding-left:10px;"><span class="od">5.27</span></div>
<div class="c s10 hd" style="left:558px;top:783px;width:79px;height:19px;line-height:21px;text-align:center;">X + тоталМ</div>
<div class="c s10 dt" style="left:558px;top:803px;width:79px;height:19px;line-height:21px;padding-left:10px;"><span class="od">3.03</span></div>
<div class="c s10 hd" style="left:638px;top:783px;width:84px;height:19px;line-height:21px;text-align:center;">1X + тоталБ</div>
<div class="c s10 dt" style="left:638px;top:803px;width:84px;height:19px;line-height:21px;padding-left:10px;"><span class="od">2.68</span></div>
<div class="c s10 hd" style="left:723px;top:783px;width:86px;height:19px;line-height:21px;text-align:center;">1X + тоталМ</div>
<div class="c s10 dt" style="left:723px;top:803px;width:86px;height:19px;line-height:21px;padding-left:10px;"><span class="od">2.24</span></div>
<div class="c s10 hd" style="left:810px;top:783px;width:84px;height:19px;line-height:21px;text-align:center;">X2 + тоталБ</div>
<div class="c s10 dt" style="left:810px;top:803px;width:84px;height:19px;line-height:21px;padding-left:10px;"><span class="od">2.68</span></div>
<div class="c s10 hd" style="left:895px;top:783px;width:86px;height:19px;line-height:21px;text-align:center;">X2 + тоталМ</div>
<div class="c s10 dt" style="left:895px;top:803px;width:86px;height:19px;line-height:21px;padding-left:10px;"><span class="od">1.89</span></div>
<div class="ab" style="left:844px;top:749px;width:25px;height:14px;border:1px dotted #222"></div>
<svg class="ab" style="left:0;top:0;pointer-events:none" width="1263" height="831" viewBox="0 0 1263 831"><path d="M258,410.5 L408,410.5 M407,411.5 L430,411.5" stroke="#ff3300" stroke-width="2.4" stroke-linecap="round" fill="none"/><path d="M146,726 L248,726" stroke="#ff3300" stroke-width="2.2" stroke-linecap="round"/><path d="M846,744 L948,744" stroke="#ff3300" stroke-width="2.2" stroke-linecap="round"/></svg>
<div class="ab" style="left:983px;top:-2px;width:240px;height:365px;border:1px solid #0b6b3a;background:#ccffcc;overflow:hidden"><svg class="ab" style="left:0;top:0" width="238" height="364" viewBox="984 -1 238 364"><g fill="#b8ecb8"><polygon points="993.5,339.6 1020,331.8 1043,363 1011.5,363"/><polygon points="1067.6,331.4 1093.8,340 1076,363 1045,363"/><path fill-rule="evenodd" d="M1116,381 A50,50 0 0 1 1216,381 Z M1138,381 A28,28 0 0 1 1194,381 Z"/></g></svg></div>
<div class="ab" style="left:1021px;top:0;width:93px;height:1px;background:#000"></div>
<div class="ab" style="left:1130px;top:0;width:56px;height:1px;background:#000"></div>
<div class="ab" style="left:1121px;top:0;width:1px;height:2px;background:#000"></div>
<div class="c b" style="left:1076px;top:2px;height:14px;line-height:14px;text-decoration:underline;letter-spacing:0">выигрыш</div>
<div class="ab" style="left:984px;top:25px;width:238px;height:29px;background:linear-gradient(180deg,#009933 0%,#009933 40%,#006633 70%,#006633 100%);border-top:1px solid #0b6b3a"></div>
<svg class="ab" style="left:993px;top:33px" width="20" height="14" viewBox="0 0 20 14"><circle cx="6.3" cy="7" r="4.3" fill="none" stroke="#ffcc00" stroke-width="2.6"/><path d="M17.5,2 L11.5,7 L17.5,12" fill="none" stroke="#ffcc00" stroke-width="2.6" stroke-linejoin="miter"/></svg>
<div class="c b" style="left:1018px;top:31px;height:18px;line-height:18px;color:#fff;font-family:'Liberation Sans',sans-serif;font-size:14px;letter-spacing:-0.55px">МОИ СТАВКИ</div>
<div class="ab" style="left:1200px;top:33px;width:14px;height:14px;background:#ffcc00;border-radius:2px"></div>
<svg class="ab" style="left:1200px;top:33px" width="14" height="14" viewBox="0 0 14 14"><path d="M3,9 L7,5 L11,9" stroke="#0b4a22" stroke-width="1.6" fill="none"/></svg>
<div class="ab" style="left:986px;top:62px;width:178px;height:51px;background:#80d080;border-top:1px solid #9a9a90;border-left:1px solid #9a9a90;box-shadow:2px 2px 0 #5f8f5f"></div>
<div class="c" style="left:993px;top:64px;height:15px;line-height:14px;color:#b35000;text-decoration:underline">Барселона - Манчестер Юн</div>
<div class="c" style="left:993px;top:84px;height:14px;line-height:14px">Другой (конкретно)</div>
<div class="ab" style="left:1098px;top:81px;width:29px;height:20px;border:1px solid #0b6b3a;background:#99cc99"></div>
<div class="c" style="left:1127px;top:84px;height:14px;line-height:14px;color:#000">:</div>
<div class="ab" style="left:1131px;top:81px;width:29px;height:20px;border:1px solid #0b6b3a;background:#99cc99"></div>
<div class="ab" style="left:1187px;top:66px;width:9px;height:9px;background:#f0f0f0;border:1px solid #c8d8c8"></div>
<svg class="ab" style="left:1186px;top:62px" width="16" height="15" viewBox="0 0 16 15"><path d="M2.2,7.5 L6,12.3 L13,2" stroke="#0a6b2a" stroke-width="3" fill="none"/></svg>
<svg class="ab" style="left:1208px;top:65px" width="12" height="11" viewBox="0 0 12 11"><path d="M2.6,2.4 L9.4,8.8 M9.4,2.4 L2.6,8.8" stroke="#0f7a30" stroke-width="3.3" stroke-linecap="round"/></svg>
<div class="c" style="left:1191px;top:80px;height:14px;line-height:14px;letter-spacing:-0.3px">28.78</div>
<div class="ab" style="left:984px;top:191px;width:238px;height:30px;background:#99cc99"></div>
<div class="c s10" style="left:993px;top:200px;height:14px;line-height:14px;letter-spacing:-0.15px">Для всех:</div>
<svg class="ab" style="left:1042px;top:196px" width="17" height="18" viewBox="0 0 17 18"><path d="M2.5,9.5 L6.5,15 L14,3" stroke="#0a7a2e" stroke-width="3.2" fill="none"/></svg>
<div class="ab" style="left:1067px;top:199px;width:12px;height:13px;background:#fff;border:1px solid #d8e8d8"></div>
<svg class="ab" style="left:1087px;top:198px" width="14" height="15" viewBox="0 0 14 15"><path d="M2,4 L3.2,13.5 Q7,15 10.8,13.5 L12,4 Z" fill="#c6cac6"/><path d="M5,5.5 v7.5 M7,5.5 v8 M9,5.5 v7.5" stroke="#8a8e8a" stroke-width="0.8"/><ellipse cx="7" cy="3.2" rx="5.6" ry="2" fill="#5e625e"/><ellipse cx="7" cy="3" rx="3.6" ry="0.9" fill="#9a9e9a"/></svg>
<div class="ab" style="left:984px;top:221px;width:238px;height:21px;background:#0f5c33"></div>
<div class="ab" style="left:984px;top:221px;width:79px;height:21px;background:#ccffcc"></div>
<div class="c" style="left:994.5px;top:224.6px;height:14px;line-height:14px;color:#000;font-size:10.7px;letter-spacing:-0.1px">одиночные</div>
<div class="c" style="left:1079.5px;top:224.6px;height:14px;line-height:14px;color:#fff;font-size:10.7px;letter-spacing:-0.1px">экспресс</div>
<div class="c" style="left:1160.5px;top:224.6px;height:14px;line-height:14px;color:#fff;font-size:10.7px;letter-spacing:-0.1px">система</div>
<div class="c" style="left:993px;top:250.4px;height:14px;line-height:14px">Сумма на каждую ставку:</div>
<div class="ab" style="left:1129px;top:247px;width:54px;height:20px;background:#fff;border:1px solid #0b6b3a"></div>
<div class="ab b" style="left:1033px;top:272px;width:140px;height:20px;border:1px solid #0b6b3a;background:linear-gradient(180deg,#fff 0%,#f2fff2 50%,#ccf5cc 100%);color:#003300;text-align:center;line-height:21px;letter-spacing:-0.45px">ОФОРМИТЬ СТАВКУ</div>
<div class="ab" style="left:732px;top:183px;width:159px;height:63px;background:#ffffd0;border:1px solid #808080;box-shadow:2px 2px 1px #8a8a8a"></div>
<div class="ab" style="left:749px;top:189.5px;width:142px;font-family:'Liberation Sans',sans-serif;font-size:14.3px;line-height:17.2px;letter-spacing:0.35px;color:#111">Ваш вариант<br>счета, с которым<br>закончится матч</div>
<svg class="ab" style="left:0;top:0;pointer-events:none" width="1263" height="831" viewBox="0 0 1263 831"><path d="M890,214 L977,99" stroke="#ff1a1a" stroke-width="1.1" fill="none"/><polygon points="987,87 971,98.5 982,106" fill="#ff0000"/><circle cx="890" cy="214" r="5" fill="#ff0000"/></svg>
</body></html>
